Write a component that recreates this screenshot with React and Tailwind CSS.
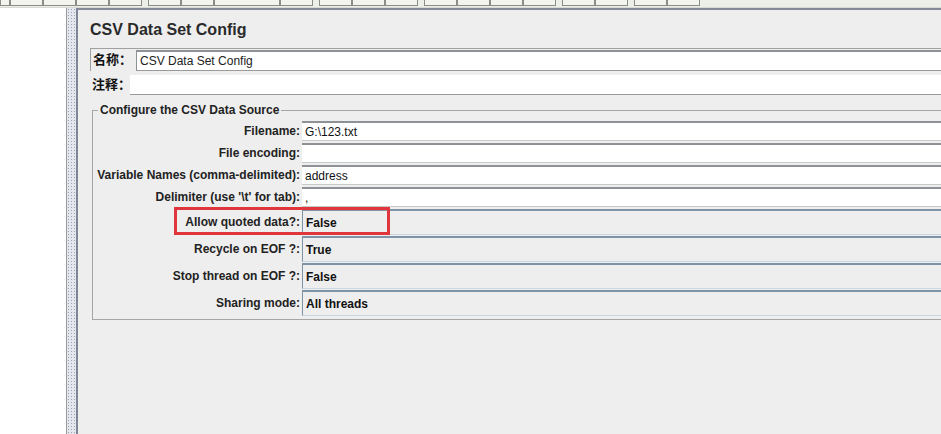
import React from 'react';

// Toolbar button widths, roughly following the screenshot strip
const toolbarButtons = [
  [10, 33, 33, 33, 33],
  [33, 33, 66, 33],
  [33, 33, 33],
  [33, 33, 33, 33],
  [33, 33],
  [33, 33],
];

const textRows = [
  { label: 'Filename:', value: 'G:\\123.txt' },
  { label: 'File encoding:', value: '' },
  { label: 'Variable Names (comma-delimited):', value: 'address' },
  { label: 'Delimiter (use \'\\t\' for tab):', value: ',' },
];

const comboRows = [
  { label: 'Allow quoted data?:', value: 'False' },
  { label: 'Recycle on EOF ?:', value: 'True' },
  { label: 'Stop thread on EOF ?:', value: 'False' },
  { label: 'Sharing mode:', value: 'All threads' },
];

function Toolbar() {
  return (
    <div className="h-[8px] bg-[#eceee8] flex items-start gap-[6px] overflow-hidden border-b border-[#d8dad4]">
      {toolbarButtons.map((group, gi) => (
        <div key={gi} className="flex">
          {group.map((w, bi) => (
            <div
              key={bi}
              className="h-[6px] border border-t-0 border-[#8c8c84] bg-[#f4f4ee]"
              style={{ width: w }}
            />
          ))}
        </div>
      ))}
    </div>
  );
}

function TextRow({ label, value }) {
  return (
    <>
      <div className="h-[22px] flex items-center justify-end pr-[2px] font-bold text-[#222] whitespace-nowrap">{label}</div>
      <div className="h-[20px] my-[1px] bg-white border-t-2 border-[#8e9296] border-b border-b-[#c8c8c8] flex items-center pl-[3px] text-[#111]">
        {value}
      </div>
    </>
  );
}

function ComboRow({ label, value }) {
  return (
    <>
      <div className="h-[27px] flex items-center justify-end pr-[2px] font-bold text-[#222] whitespace-nowrap">{label}</div>
      <div className="h-[26px] mt-[1px] bg-[#eeeeee] border-t-2 border-l border-[#7f93a6] border-b border-b-[#c9d6e3] flex items-center pl-[3px] font-bold text-[#111]">
        {value}
      </div>
    </>
  );
}

export default function App() {
  return (
    <div
      className="w-[941px] h-[434px] overflow-hidden bg-[#eeeeee] text-[12px] flex flex-col"
      style={{ fontFamily: '"Liberation Sans", Arial, "Noto Sans CJK SC", sans-serif' }}
    >
      <Toolbar />
      <div className="flex flex-1 min-h-0">
        {/* Tree panel */}
        <div className="w-[67px] bg-white border-r border-[#9a9a9a]" />
        {/* Splitter */}
        <div className="w-[11px] bg-[#e4e8ee] bg-[radial-gradient(#9aa4b4_0.8px,transparent_0.9px)] bg-[length:3px_3px] border-r-2 border-[#7e8797]" />
        {/* Main config panel */}
        <div className="flex-1 min-w-0 border-t-2 border-[#858a99] pl-[12px] pt-[9px]">
          <div className="text-[16px] font-bold text-[#2a2a2a] h-[22px] leading-[22px]">CSV Data Set Config</div>
          <div className="mt-[7px] h-[23px] border-t border-l border-[#a0a0a0] flex items-center">
            <span className="w-[45px] shrink-0 pl-[2px] font-bold text-[13px] text-[#111] whitespace-nowrap">名称：</span>
            <div className="flex-1 h-[21px] bg-white border-t-2 border-l border-[#8e9296] border-b border-b-[#9a9a9a] flex items-center pl-[3px] text-[#222]">
              CSV Data Set Config
            </div>
          </div>
          <div className="mt-[4px] h-[20px] flex items-center">
            <span className="w-[40px] shrink-0 pl-[2px] font-bold text-[13px] text-[#111] whitespace-nowrap">注释：</span>
            <div className="flex-1 h-[20px] bg-white border-b border-[#9a9a9a]" />
          </div>
          {/* Group box */}
          <div className="relative mt-[15px] ml-[2px] border border-[#a6a6a6] border-r-0 pt-[9px] pb-[3px]">
            <div className="absolute -top-[8px] left-[5px] bg-[#eeeeee] px-[2px] font-bold text-[#222] leading-[15px]">
              Configure the CSV Data Source
            </div>
            <div className="grid grid-cols-[209px_1fr]">
              {textRows.map((r) => (
                <TextRow key={r.label} {...r} />
              ))}
              {comboRows.map((r) => (
                <ComboRow key={r.label} {...r} />
              ))}
            </div>
            {/* Annotation box */}
            <div className="absolute left-[81px] top-[96px] w-[216px] h-[28px] border-[3px] border-[#e0353b]" />
          </div>
        </div>
      </div>
    </div>
  );
}
